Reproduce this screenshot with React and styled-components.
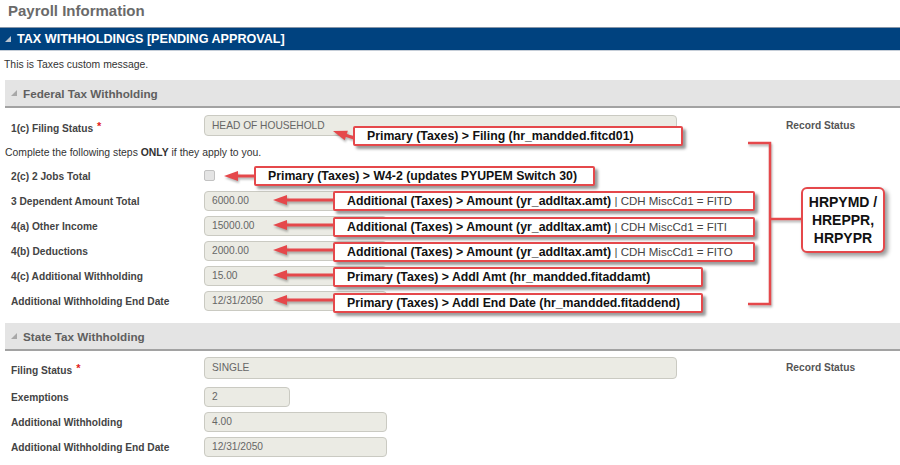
import React from "react";
import styled, { createGlobalStyle } from "styled-components";

const RED = "#e5484b";

const GlobalStyle = createGlobalStyle`
  html, body {
    margin: 0;
    padding: 0;
    background: #fff;
  }
  * {
    box-sizing: border-box;
  }
`;

const Page = styled.div`
  position: relative;
  width: 900px;
  height: 465px;
  overflow: hidden;
  background: #fff;
  font-family: "Liberation Sans", Arial, sans-serif;
  color: #333;
`;

const Title = styled.h1`
  margin: 0;
  height: 27px;
  padding: 2px 0 0 8px;
  font-size: 15px;
  line-height: 18px;
  font-weight: bold;
  color: #6a6a6a;
`;

const Banner = styled.div`
  display: flex;
  align-items: center;
  gap: 6px;
  height: 24px;
  padding-left: 5px;
  background: #00427f;
  border-top: 1px solid #8796a8;
  border-bottom: 1px solid #c6ced8;
  color: #fff;
  font-size: 12.6px;
  font-weight: bold;
`;

const Message = styled.div`
  height: 26px;
  padding-left: 4px;
  display: flex;
  align-items: center;
  font-size: 10.4px;
  color: #333;
`;

const SectionHeader = styled.div`
  display: flex;
  align-items: center;
  gap: 6px;
  height: 28px;
  margin: ${(p) => p.$top}px 0 0 5px;
  padding-left: 6px;
  background: #e4e4e4;
  border-bottom: 2px solid #a2a2a2;
  color: #5f5f5f;
  font-size: 11.7px;
  font-weight: bold;
`;

const Row = styled.div`
  display: grid;
  grid-template-columns: 193px 582px 1fr;
  align-items: center;
  height: ${(p) => p.$h || 25}px;
  padding-left: 11px;
`;

const Label = styled.div`
  font-size: 10.2px;
  font-weight: bold;
  color: #444;
  white-space: nowrap;
  padding-top: ${(p) => p.$drop || 2}px;
`;

const Required = styled.span`
  color: #e21b1b;
  margin-left: 4px;
  font-size: 11px;
  position: relative;
  top: -2px;
`;

const Field = styled.div`
  width: ${(p) => p.$w}px;
  height: ${(p) => p.$h || 20}px;
  display: flex;
  align-items: center;
  padding-left: 7px;
  background: #ebebe4;
  border: 1px solid #cacac2;
  border-radius: 4px;
  font-size: 10.2px;
  color: #666;
`;

const Check = styled.div`
  width: 11px;
  height: 11px;
  background: #e4e4e4;
  border: 1px solid #c2c2c2;
  border-radius: 2px;
`;

const RecordStatus = styled.div`
  font-size: 10.2px;
  font-weight: bold;
  color: #555;
`;

const Note = styled.div`
  height: 21px;
  display: flex;
  align-items: center;
  padding-left: 5px;
  font-size: 10.4px;
  color: #333;
`;

const Overlay = styled.svg`
  position: absolute;
  left: 0;
  top: 0;
  pointer-events: none;
  filter: drop-shadow(1px 2px 1px rgba(0, 0, 0, 0.3));
`;

const Callout = styled.div`
  position: absolute;
  left: ${(p) => p.$x}px;
  top: ${(p) => p.$y}px;
  width: ${(p) => p.$w}px;
  height: ${(p) => p.$h || 20}px;
  padding-left: 12px;
  background: #fff;
  border: 2px solid ${RED};
  border-radius: 2px;
  box-shadow: 3px 3px 3px rgba(0, 0, 0, 0.4);
  font-size: 12.3px;
  font-weight: bold;
  line-height: ${(p) => (p.$h || 20) - 4}px;
  color: #111;
  white-space: nowrap;
`;

const Meta = styled.span`
  font-weight: normal;
  font-size: 11.5px;
  color: #444;
`;

const TableBox = styled.div`
  position: absolute;
  left: 801px;
  top: 187px;
  width: 84px;
  height: 66px;
  display: flex;
  align-items: center;
  justify-content: center;
  text-align: center;
  background: #fff;
  border: 2px solid ${RED};
  border-radius: 6px;
  box-shadow: 3px 3px 4px rgba(0, 0, 0, 0.4);
  font-size: 14px;
  font-weight: bold;
  line-height: 18px;
  color: #111;
`;

const Triangle = ({ color }) => (
  <svg width="6" height="6" viewBox="0 0 6 6">
    <polygon points="6,0 6,6 0,6" fill={color} />
  </svg>
);

const Arrow = ({ from, to }) => {
  const [x1, y1] = from;
  const [x2, y2] = to;
  const dx = x1 - x2;
  const dy = y1 - y2;
  const len = Math.hypot(dx, dy);
  const ux = dx / len;
  const uy = dy / len;
  const bx = x2 + ux * 14;
  const by = y2 + uy * 14;
  const head = [
    [x2, y2],
    [bx - uy * 5, by + ux * 5],
    [bx + uy * 5, by - ux * 5],
  ]
    .map((p) => p.join(","))
    .join(" ");
  return (
    <g>
      <line x1={x1} y1={y1} x2={bx - ux * 2} y2={by - uy * 2} stroke={RED} strokeWidth="3" />
      <polygon points={head} fill={RED} />
    </g>
  );
};

const arrows = [
  { from: [354, 138], to: [333, 131] },
  { from: [255, 176], to: [224, 176] },
  { from: [334, 200], to: [273, 200] },
  { from: [334, 225], to: [273, 225] },
  { from: [334, 250], to: [273, 250] },
  { from: [334, 275], to: [273, 275] },
  { from: [334, 300], to: [273, 300] },
];

export default function App() {
  return (
    <>
      <GlobalStyle />
      <Page>
        <Title>Payroll Information</Title>
        <Banner>
          <Triangle color="#b9c3cf" />
          TAX WITHHOLDINGS [PENDING APPROVAL]
        </Banner>
        <Message>This is Taxes custom message.</Message>

        <SectionHeader $top={3}>
          <Triangle color="#a8a8a8" />
          Federal Tax Withholding
        </SectionHeader>
        <Row $h={34}>
          <Label $drop={5}>
            1(c) Filing Status<Required>*</Required>
          </Label>
          <Field $w={473} $h={21}>HEAD OF HOUSEHOLD</Field>
          <RecordStatus>Record Status</RecordStatus>
        </Row>
        <Note>
          Complete the following steps&nbsp;<b>ONLY</b>&nbsp;if they apply to you.
        </Note>
        <Row>
          <Label>2(c) 2 Jobs Total</Label>
          <Check />
        </Row>
        <Row>
          <Label>3 Dependent Amount Total</Label>
          <Field $w={183}>6000.00</Field>
        </Row>
        <Row>
          <Label>4(a) Other Income</Label>
          <Field $w={183}>15000.00</Field>
        </Row>
        <Row>
          <Label>4(b) Deductions</Label>
          <Field $w={183}>2000.00</Field>
        </Row>
        <Row>
          <Label>4(c) Additional Withholding</Label>
          <Field $w={183}>15.00</Field>
        </Row>
        <Row>
          <Label>Additional Withholding End Date</Label>
          <Field $w={183}>12/31/2050</Field>
        </Row>

        <SectionHeader $top={10}>
          <Triangle color="#a8a8a8" />
          State Tax Withholding
        </SectionHeader>
        <Row $h={33}>
          <Label $drop={5}>
            Filing Status<Required>*</Required>
          </Label>
          <Field $w={473} $h={22}>SINGLE</Field>
          <RecordStatus>Record Status</RecordStatus>
        </Row>
        <Row>
          <Label>Exemptions</Label>
          <Field $w={86}>2</Field>
        </Row>
        <Row>
          <Label>Additional Withholding</Label>
          <Field $w={183}>4.00</Field>
        </Row>
        <Row>
          <Label>Additional Withholding End Date</Label>
          <Field $w={183}>12/31/2050</Field>
        </Row>

        <Overlay width="900" height="465">
          {arrows.map((a, i) => (
            <Arrow key={i} from={a.from} to={a.to} />
          ))}
          <polyline
            points="748,143 770,143 770,304 748,304"
            fill="none"
            stroke={RED}
            strokeWidth="2.5"
          />
          <line x1="770" y1="219" x2="802" y2="219" stroke={RED} strokeWidth="2.5" />
        </Overlay>

        <Callout $x={353} $y={126} $w={330}>
          Primary (Taxes) &gt; Filing (hr_mandded.fitcd01)
        </Callout>
        <Callout $x={254} $y={166} $w={341}>
          Primary (Taxes) &gt; W4-2 (updates PYUPEM Switch 30)
        </Callout>
        <Callout $x={333} $y={191} $w={422}>
          Additional (Taxes) &gt; Amount (yr_addltax.amt) <Meta>| CDH MiscCd1 = FITD</Meta>
        </Callout>
        <Callout $x={333} $y={217} $w={422}>
          Additional (Taxes) &gt; Amount (yr_addltax.amt) <Meta>| CDH MiscCd1 = FITI</Meta>
        </Callout>
        <Callout $x={333} $y={242} $w={422}>
          Additional (Taxes) &gt; Amount (yr_addltax.amt) <Meta>| CDH MiscCd1 = FITO</Meta>
        </Callout>
        <Callout $x={333} $y={267} $w={370}>
          Primary (Taxes) &gt; Addl Amt (hr_mandded.fitaddamt)
        </Callout>
        <Callout $x={333} $y={293} $w={370}>
          Primary (Taxes) &gt; Addl End Date (hr_mandded.fitaddend)
        </Callout>

        <TableBox>
          HRPYMD /
          <br />
          HREPPR,
          <br />
          HRPYPR
        </TableBox>
      </Page>
    </>
  );
}
